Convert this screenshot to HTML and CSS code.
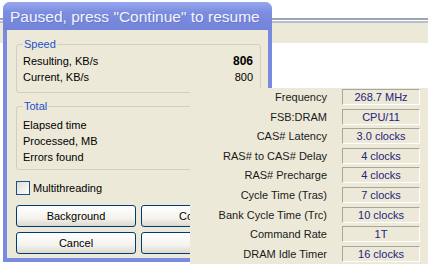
FILE: index.html
```html
<!DOCTYPE html>
<html lang="en">
<head>
    <meta charset="UTF-8">
    <title>Paused</title>
    <link rel="stylesheet" href="styles.css">
</head>
<body>
    <div class="desk">
        <!-- window behind the dialog -->
        <div class="back-top"></div>
        <div class="back-rule"></div>
        <div class="back-band"></div>

        <div class="dialog">
            <div class="titlebar">Paused, press "Continue" to resume</div>
            <div class="dialog-body">
                <fieldset class="group">
                    <legend>Speed</legend>
                    <div class="row"><span>Resulting, KB/s</span><b>806</b></div>
                    <div class="row"><span>Current, KB/s</span><span>800</span></div>
                </fieldset>
                <fieldset class="group group-total">
                    <legend>Total</legend>
                    <div class="row"><span>Elapsed time</span></div>
                    <div class="row"><span>Processed, MB</span></div>
                    <div class="row"><span>Errors found</span></div>
                </fieldset>
                <label class="check"><span class="box"></span>Multithreading</label>
                <div class="buttons">
                    <button>Background</button>
                    <button>Continue</button>
                    <button>Cancel</button>
                    <button>Help</button>
                </div>
            </div>
        </div>

        <div class="memory">
            <span class="label">Frequency</span><span class="value">268.7 MHz</span>
            <span class="label">FSB:DRAM</span><span class="value">CPU/11</span>
            <span class="label">CAS# Latency</span><span class="value">3.0 clocks</span>
            <span class="label">RAS# to CAS# Delay</span><span class="value">4 clocks</span>
            <span class="label">RAS# Precharge</span><span class="value">4 clocks</span>
            <span class="label">Cycle Time (Tras)</span><span class="value">7 clocks</span>
            <span class="label">Bank Cycle Time (Trc)</span><span class="value">10 clocks</span>
            <span class="label">Command Rate</span><span class="value">1T</span>
            <span class="label">DRAM Idle Timer</span><span class="value">16 clocks</span>
        </div>
    </div>
</body>
</html>
```

FILE: styles.css
```css
body {
    margin: 0;
    padding: 0;
    font-family: "Liberation Sans", Arial, sans-serif;
    font-size: 11px;
    color: #000;
    background: #fff;
}
.desk {
    position: relative;
    width: 428px;
    height: 264px;
    overflow: hidden;
    background: #fff;
}
.back-top {
    height: 18px;
}
.back-rule {
    height: 1px;
    border-top: 2px solid #9aa4b4;
    border-bottom: 2px solid #b9bec8;
}
.back-band {
    height: 20px;
    background: #ece9d8;
}

/* dialog */
.dialog {
    position: absolute;
    left: 3px;
    top: 2px;
    width: 269px;
    height: 260px;
    display: flex;
    flex-direction: column;
    background: #7a8ade;
    border-radius: 7px 7px 0 0;
}
.titlebar {
    height: 28px;
    line-height: 29px;
    padding-left: 7px;
    font-size: 15.5px;
    color: #f2f4ff;
    background: linear-gradient(#97a7ee, #7d8ee0 35%, #7283d9);
    border-radius: 7px 7px 0 0;
    white-space: nowrap;
    text-shadow: 1px 1px 0 #6a79c8;
}
.dialog-body {
    flex: 1;
    margin: 0 4px 4px 4px;
    padding: 8px 7px 4px 9px;
    background: #ece9d8;
}
.group {
    margin: 0;
    padding: 2px 7px 7px 6px;
    border: 1px solid #d0d0bf;
    border-radius: 3px;
}
.group legend {
    padding: 0 1px;
    line-height: 13px;
    color: #1f4ec9;
}
.group-total {
    margin-top: 7px;
    padding-top: 4px;
    padding-bottom: 4px;
}
.row {
    display: flex;
    justify-content: space-between;
    line-height: 16px;
    height: 16px;
}
.row b {
    font-size: 12px;
}
.check {
    display: flex;
    align-items: center;
    gap: 3px;
    margin-top: 10px;
    height: 16px;
}
.box {
    width: 12px;
    height: 12px;
    border: 1px solid #1c5180;
    background: linear-gradient(135deg, #dcdcd6, #fff);
}
.buttons {
    display: grid;
    grid-template-columns: 120px 120px;
    column-gap: 5px;
    row-gap: 5px;
    margin-top: 9px;
}
.buttons button {
    height: 22px;
    padding: 0;
    font-family: "Liberation Sans", Arial, sans-serif;
    font-size: 11px;
    color: #000;
    border: 1px solid #003c74;
    border-radius: 3px;
    background: linear-gradient(#fff, #f4f3ee 60%, #dcd9cd);
}

/* memory timings panel in front */
.memory {
    position: absolute;
    left: 190px;
    top: 88px;
    right: 0;
    bottom: 0;
    padding: 1px 8px 0 0;
    background: #ece9d8;
    display: grid;
    grid-template-columns: 137px 78px;
    grid-auto-rows: 16px;
    column-gap: 15px;
    row-gap: 3.6px;
    align-content: start;
}
.label {
    text-align: right;
    line-height: 16px;
    color: #1a1a1a;
}
.value {
    box-sizing: border-box;
    text-align: center;
    line-height: 14px;
    color: #23237a;
    border-top: 1px solid #a8a69a;
    border-left: 1px solid #a8a69a;
    border-right: 1px solid #fff;
    border-bottom: 1px solid #fff;
}
```
